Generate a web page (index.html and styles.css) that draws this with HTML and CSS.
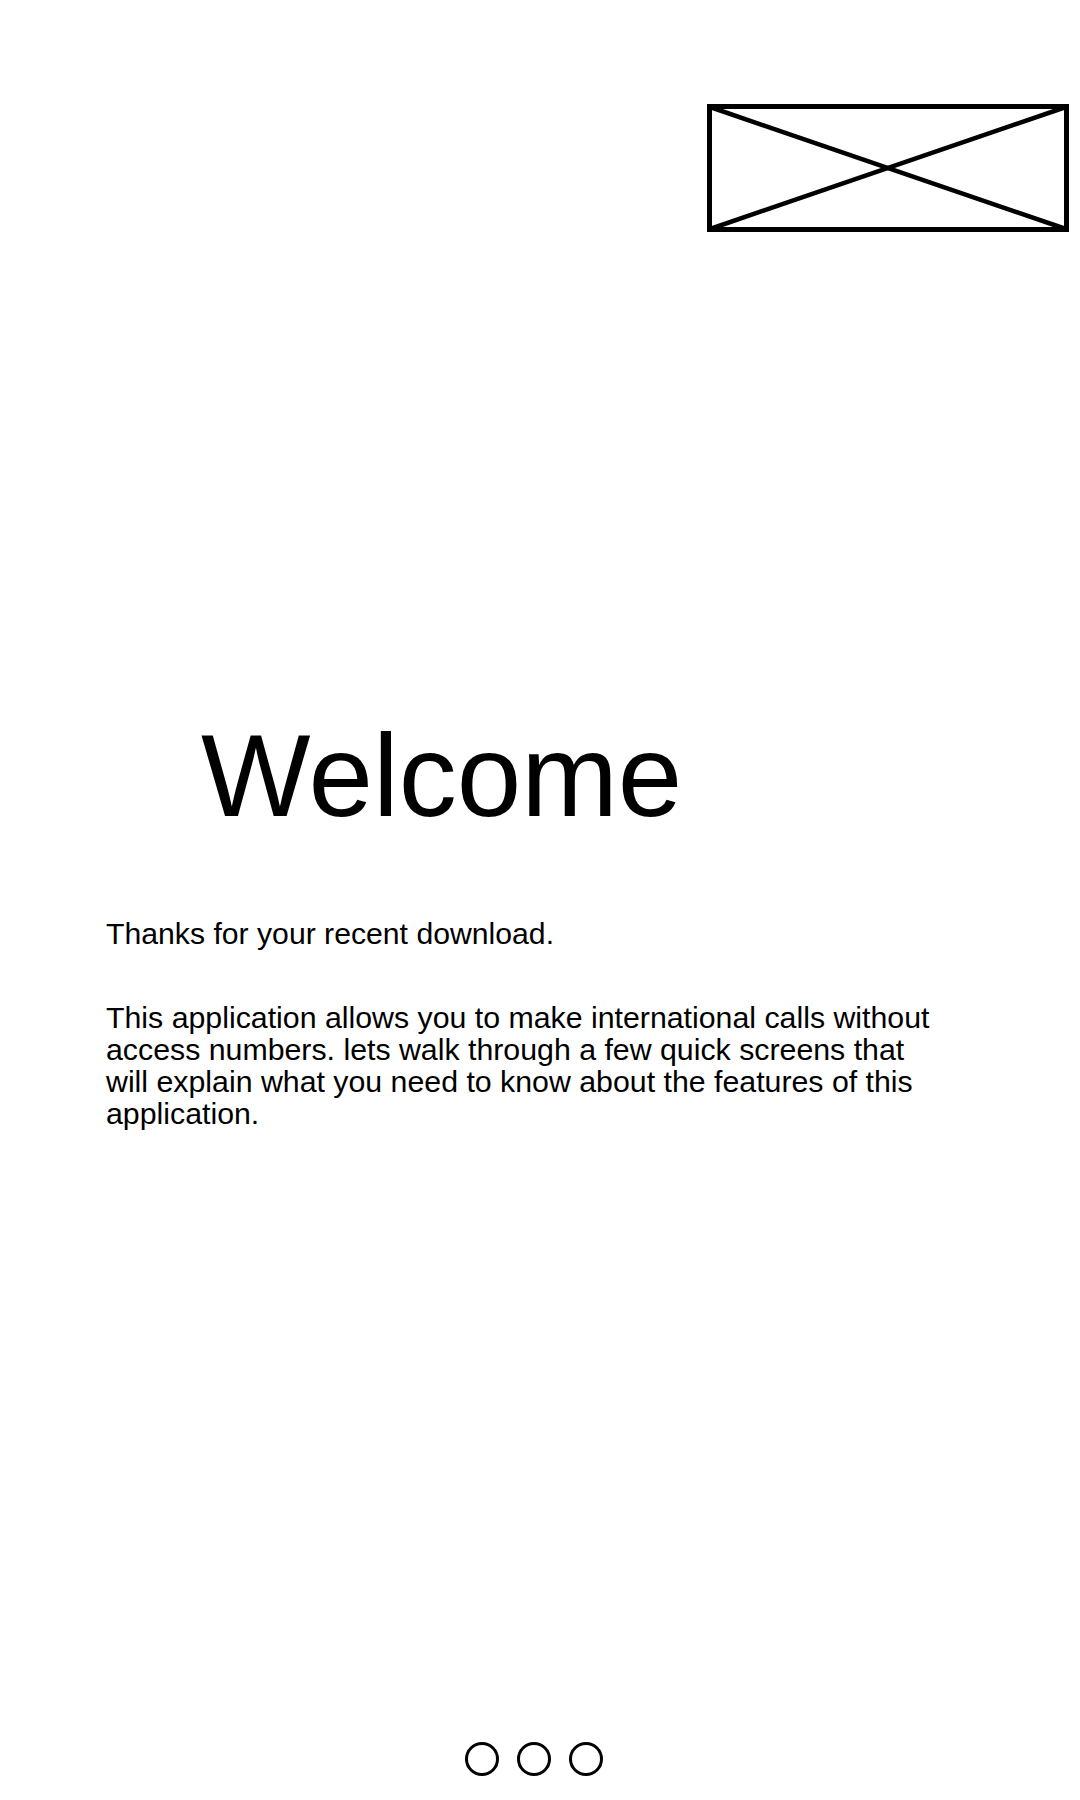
FILE: index.html
```html
<!DOCTYPE html>
<html lang="en">
<head>
<meta charset="utf-8">
<title>Welcome</title>
<link rel="stylesheet" href="styles.css">
</head>
<body>
<div class="screen">
  <header class="top">
    <svg class="placeholder" width="362" height="128" viewBox="0 0 362 128" aria-hidden="true">
      <rect x="2.5" y="2.5" width="357" height="123" fill="none" stroke="#000" stroke-width="5"/>
      <line x1="3" y1="3" x2="359" y2="125" stroke="#000" stroke-width="4.5"/>
      <line x1="359" y1="3" x2="3" y2="125" stroke="#000" stroke-width="4.5"/>
    </svg>
  </header>
  <h1 class="title">Welcome</h1>
  <p class="thanks">Thanks for your recent download.</p>
  <p class="intro">This application allows you to make international calls without access numbers. lets walk through a few quick screens that will explain what you need to know about the features of this application.</p>
  <div class="dots">
    <span class="dot"></span>
    <span class="dot"></span>
    <span class="dot"></span>
  </div>
</div>
</body>
</html>
```

FILE: styles.css
```css
html, body {
  margin: 0;
  padding: 0;
  background: #fff;
}

body {
  font-family: "Liberation Sans", Arial, sans-serif;
  color: #000;
}

.screen {
  width: 1080px;
  height: 1800px;
  display: flex;
  flex-direction: column;
}

.top {
  display: flex;
  justify-content: flex-end;
  padding-top: 104px;
  padding-right: 11px;
}

.placeholder {
  display: block;
}

.title {
  margin: 486px 0 0 0;
  padding-left: 201px;
  font-size: 116px;
  line-height: 116px;
  font-weight: normal;
}

.thanks {
  margin: 84px 0 0 0;
  padding-left: 106px;
  font-size: 30.2px;
  line-height: 31px;
}

.intro {
  margin: 53px 0 0 0;
  padding-left: 106px;
  width: 832px;
  font-size: 30.3px;
  line-height: 32px;
}

.dots {
  display: flex;
  justify-content: center;
  gap: 18px;
  padding-right: 12px;
  margin-top: 612px;
}

.dot {
  width: 28px;
  height: 28px;
  border: 3px solid #000;
  border-radius: 50%;
}
```
